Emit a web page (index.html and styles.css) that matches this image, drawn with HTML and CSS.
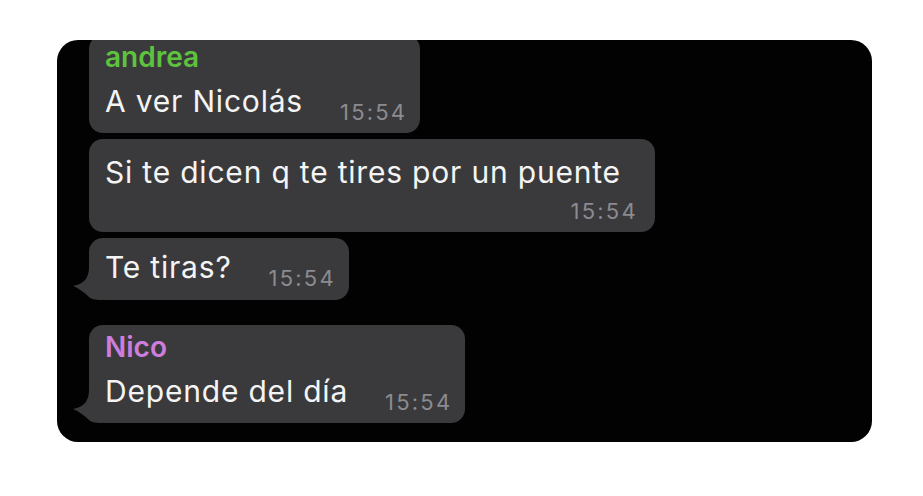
FILE: index.html
```html
<!DOCTYPE html>
<html lang="es">
<head>
<meta charset="utf-8">
<title>Chat</title>
<link rel="stylesheet" href="styles.css">
</head>
<body>
<div class="card">
  <div class="thread">
    <div class="bubble first">
      <div class="name green">andrea</div>
      <div class="row">
        <span class="msg">A ver Nicolás</span>
        <span class="time">15:54</span>
      </div>
    </div>
    <div class="bubble plain stacked">
      <div class="row">
        <span class="msg">Si te dicen q te tires por un puente</span>
        <span class="time">15:54</span>
      </div>
    </div>
    <div class="bubble plain tailed">
      <div class="row">
        <span class="msg">Te tiras?</span>
        <span class="time">15:54</span>
      </div>
      <svg class="tail" width="30" height="36" viewBox="0 0 30 36"><path d="M17,3 C17,14 12,20 1,22 C6,24 12,28 17,33 C19,35 22,36 30,36 L30,3 Z"/></svg>
    </div>
    <div class="bubble tailed later">
      <div class="name purple">Nico</div>
      <div class="row">
        <span class="msg">Depende del día</span>
        <span class="time">15:54</span>
      </div>
      <svg class="tail" width="30" height="36" viewBox="0 0 30 36"><path d="M17,3 C17,14 12,20 1,22 C6,24 12,28 17,33 C19,35 22,36 30,36 L30,3 Z"/></svg>
    </div>
  </div>
</div>
</body>
</html>
```

FILE: styles.css
```css
html, body {
  margin: 0;
  padding: 0;
  background: #ffffff;
}

body {
  font-family: Inter, "Liberation Sans", sans-serif;
  padding: 40px 0 0 57px;
}

.card {
  width: 815px;
  height: 402px;
  background: #020203;
  border-radius: 21px;
  overflow: hidden;
  box-sizing: border-box;
  padding-left: 32px;
}

.thread {
  display: flex;
  flex-direction: column;
  align-items: flex-start;
  gap: 6px;
}

.bubble {
  position: relative;
  background: #3a3a3c;
  border-radius: 14px;
  padding: 6px 13px 14px 16px;
  color: #f4f4f4;
}

.bubble.first {
  margin-top: -5px;
}

.bubble.plain {
  padding-top: 11px;
  padding-bottom: 15px;
}

.bubble.later {
  margin-top: 19px;
}

.name {
  font-size: 28px;
  font-weight: 600;
  line-height: 32px;
}

.green { color: #5ec23f; }
.purple { color: #cd7ddc; }

.row {
  display: flex;
  align-items: flex-end;
  margin-top: 10px;
}

.plain .row {
  margin-top: 0;
}

.msg {
  font-size: 30px;
  line-height: 36px;
  letter-spacing: 0.8px;
  white-space: nowrap;
}

.time {
  font-size: 22px;
  line-height: 21px;
  color: #8b8b90;
  margin-left: 37px;
  margin-bottom: -4px;
  letter-spacing: 2.2px;
}

.bubble.stacked {
  padding: 15px 34px 10px 16px;
}

.stacked .row {
  flex-direction: column;
  align-items: stretch;
}

.stacked .time {
  align-self: flex-end;
  margin: 11px -17px 0 0;
}

.tail {
  position: absolute;
  left: -17px;
  bottom: 0;
  fill: #3a3a3c;
}
```
